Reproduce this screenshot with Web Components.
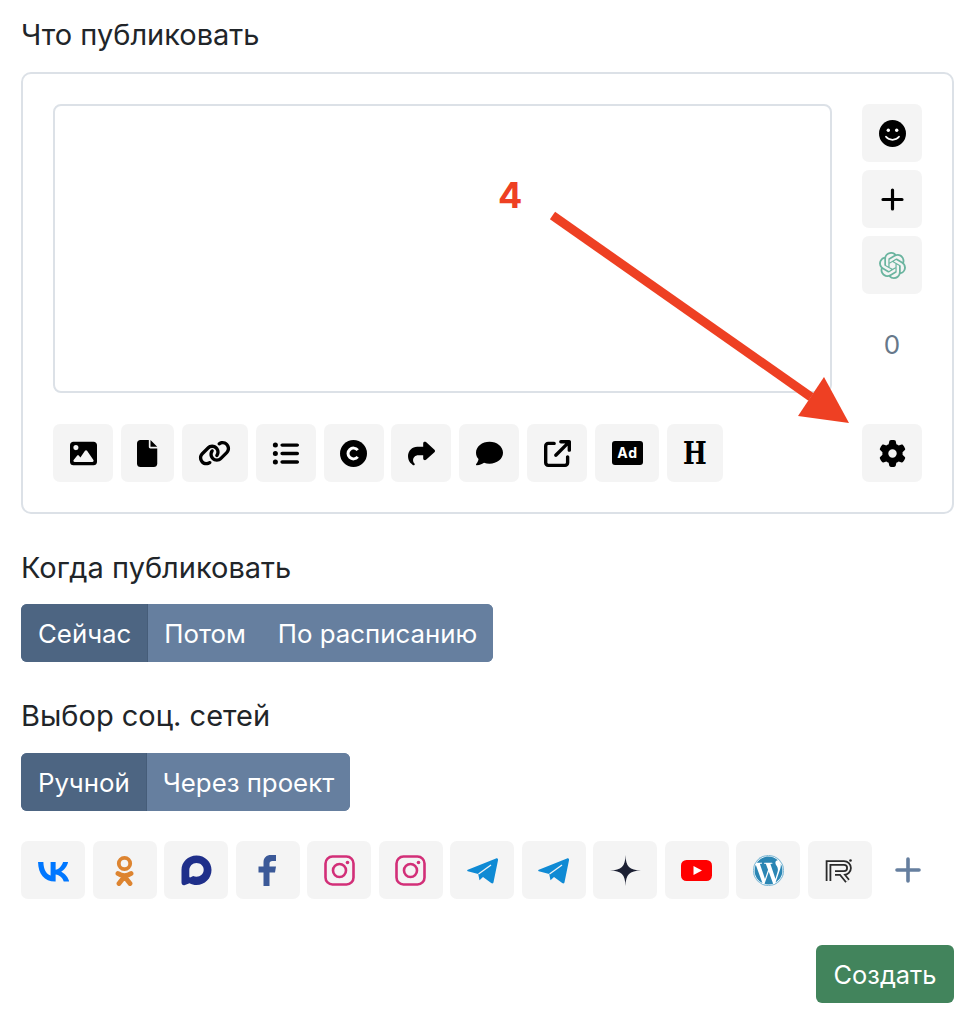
<!DOCTYPE html>
<html lang="ru">
<head>
<meta charset="utf-8">
<title>Что публиковать</title>
<style>
  html, body { margin: 0; background: #fff; }
  body { font-family: Inter, "Liberation Sans", sans-serif; color: #212529; }
  .heading-glyph { display: block; width: 31px; margin-right: -7.5px; font: 700 31px/27px "DejaVu Serif", serif; color: #000; transform: scaleX(.81); transform-origin: 0 50%; }
</style>
</head>
<body>
<publish-form>
  <form-label>Что публиковать</form-label>
  <composer-card>
    <icon-button slot="side"><svg width="27" height="27" viewBox="0 0 27 27"><circle cx="13.5" cy="13.5" r="13.5"/><circle cx="9.3" cy="10.3" r="1.7" fill="#fff"/><circle cx="17.7" cy="10.3" r="1.7" fill="#fff"/><path d="M7 16.8c3.300 4 9.700 4 13 0" fill="none" stroke="#fff" stroke-width="1.8" stroke-linecap="round"/></svg></icon-button>
    <icon-button slot="side"><svg width="27" height="27" viewBox="0 0 27 27"><path d="M13.5 4v19M4 13.500h19" stroke="#000" stroke-width="3.200" stroke-linecap="round"/></svg></icon-button>
    <icon-button slot="side"><svg width="27" height="27" viewBox="0 0 24 24" fill="#6ab49f"><path d="M22.282 9.821a5.985 5.985 0 0 0-.516-4.91 6.046 6.046 0 0 0-6.51-2.9A6.065 6.065 0 0 0 4.981 4.18a5.985 5.985 0 0 0-3.998 2.9 6.046 6.046 0 0 0 .743 7.097 5.98 5.98 0 0 0 .51 4.911 6.051 6.051 0 0 0 6.515 2.9A5.985 5.985 0 0 0 13.26 24a6.056 6.056 0 0 0 5.772-4.206 5.99 5.99 0 0 0 3.997-2.9 6.057 6.057 0 0 0-.747-7.073zM13.26 22.43a4.476 4.476 0 0 1-2.876-1.04l.141-.081 4.779-2.758a.795.795 0 0 0 .392-.681v-6.737l2.02 1.168a.071.071 0 0 1 .038.052v5.583a4.504 4.504 0 0 1-4.494 4.494zM3.6 18.304a4.47 4.47 0 0 1-.535-3.014l.142.085 4.783 2.759a.771.771 0 0 0 .78 0l5.843-3.369v2.332a.08.08 0 0 1-.033.062L9.74 19.95a4.5 4.5 0 0 1-6.14-1.646zM2.34 7.896a4.485 4.485 0 0 1 2.366-1.973V11.6a.766.766 0 0 0 .388.676l5.815 3.355-2.02 1.168a.076.076 0 0 1-.071 0l-4.83-2.786A4.504 4.504 0 0 1 2.34 7.872zm16.597 3.855l-5.833-3.387L15.119 7.2a.076.076 0 0 1 .071 0l4.83 2.791a4.494 4.494 0 0 1-.676 8.105v-5.678a.79.79 0 0 0-.407-.667zm2.01-3.023l-.141-.085-4.774-2.782a.776.776 0 0 0-.785 0L9.409 9.23V6.897a.066.066 0 0 1 .028-.061l4.83-2.787a4.5 4.5 0 0 1 6.68 4.66zm-12.64 4.135l-2.02-1.164a.08.08 0 0 1-.038-.057V6.075a4.5 4.5 0 0 1 7.375-3.453l-.142.08L8.704 5.46a.795.795 0 0 0-.393.681zm1.097-2.365l2.602-1.5 2.607 1.5v2.999l-2.597 1.5-2.607-1.5z"/></svg></icon-button>
    <span slot="count">0</span>

    <icon-button slot="tools"><svg width="27" height="27" viewBox="0 0 512 512"><path d="M0 96C0 60.700 28.700 32 64 32H448c35.300 0 64 28.700 64 64V416c0 35.300-28.700 64-64 64H64c-35.300 0-64-28.700-64-64V96zM323.800 202.500c-4.500-6.600-11.900-10.500-19.800-10.500s-15.400 3.900-19.800 10.500l-87 127.600L170.700 297c-4.600-5.700-11.500-9-18.700-9s-14.200 3.300-18.700 9l-64 80c-5.800 7.200-6.900 17.100-2.900 25.400s12.400 13.600 21.600 13.600h96 32H424c8.900 0 17.100-4.900 21.200-12.800s3.600-17.400-1.400-24.700l-120-176zM112 192a48 48 0 1 0 0-96 48 48 0 1 0 0 96z"/></svg></icon-button>
    <icon-button slot="tools"><svg width="20.250" height="27" viewBox="0 0 384 512"><path d="M0 64C0 28.700 28.700 0 64 0H224V128c0 17.700 14.300 32 32 32H384V448c0 35.300-28.700 64-64 64H64c-35.300 0-64-28.700-64-64V64zm384 64H256V0L384 128z"/></svg></icon-button>
    <icon-button slot="tools"><svg width="33" height="26.400" viewBox="0 0 640 512"><path d="M579.800 267.700c56.500-56.500 56.500-148 0-204.500c-50-50-128.800-56.500-186.300-15.400l-1.600 1.100c-14.400 10.300-17.700 30.300-7.400 44.600s30.300 17.700 44.600 7.400l1.600-1.100c32.100-22.900 76-19.300 103.800 8.600c31.500 31.500 31.500 82.500 0 114L422.300 334.800c-31.500 31.500-82.500 31.500-114 0c-27.900-27.900-31.500-71.800-8.600-103.800l1.100-1.600c10.300-14.400 6.900-34.400-7.400-44.600s-34.400-6.900-44.600 7.400l-1.100 1.600C206.500 251.200 213 330 263 380c56.500 56.500 148 56.500 204.500 0L579.800 267.700zM60.200 244.300c-56.500 56.500-56.500 148 0 204.500c50 50 128.800 56.500 186.300 15.400l1.600-1.100c14.400-10.300 17.700-30.300 7.400-44.600s-30.300-17.700-44.600-7.400l-1.600 1.100c-32.100 22.900-76 19.300-103.800-8.600C74 372 74 321 105.500 289.500L217.700 177.200c31.500-31.500 82.500-31.500 114 0c27.900 27.900 31.500 71.800 8.600 103.900l-1.100 1.600c-10.300 14.400-6.900 34.400 7.400 44.600s34.400 6.900 44.600-7.400l1.100-1.600C433.500 260.800 427 182 377 132c-56.500-56.500-148-56.500-204.500 0L60.200 244.300z"/></svg></icon-button>
    <icon-button slot="tools"><svg width="27" height="27" viewBox="0 0 512 512"><path d="M64 144a48 48 0 1 0 0-96 48 48 0 1 0 0 96zM192 64c-17.700 0-32 14.300-32 32s14.300 32 32 32H480c17.700 0 32-14.300 32-32s-14.300-32-32-32H192zm0 160c-17.700 0-32 14.300-32 32s14.300 32 32 32H480c17.700 0 32-14.300 32-32s-14.300-32-32-32H192zm0 160c-17.700 0-32 14.300-32 32s14.300 32 32 32H480c17.700 0 32-14.300 32-32s-14.300-32-32-32H192zM64 464a48 48 0 1 0 0-96 48 48 0 1 0 0 96zm48-208a48 48 0 1 0 -96 0 48 48 0 1 0 96 0z"/></svg></icon-button>
    <icon-button slot="tools"><svg width="27" height="27" viewBox="0 0 27 27"><circle cx="13.5" cy="13.5" r="13.5"/><path d="M17.700 10.200a5.400 5.400 0 1 0 0 6.600" fill="none" stroke="#fff" stroke-width="3"/></svg></icon-button>
    <icon-button slot="tools"><svg width="27" height="27" viewBox="0 0 512 512"><path d="M307 34.800c-11.500 5.100-19 16.600-19 29.200v64H176C78.800 128 0 206.800 0 304C0 417.300 81.500 467.900 100.200 478.100c2.500 1.400 5.300 1.900 8.100 1.900c10.900 0 19.700-8.900 19.700-19.700c0-7.500-4.300-14.400-9.800-19.500C108.800 431.900 96 414.400 96 384c0-53 43-96 96-96h96v64c0 12.600 7.400 24.100 19 29.200s25 3 34.400-5.400l160-144c6.700-6.100 10.600-14.700 10.600-23.800s-3.800-17.700-10.600-23.800l-160-144c-9.400-8.500-22.900-10.600-34.400-5.400z"/></svg></icon-button>
    <icon-button slot="tools"><svg width="27" height="27" viewBox="0 0 512 512"><path d="M512 240c0 114.900-114.600 208-256 208c-37.100 0-72.300-6.400-104.100-17.900c-11.900 8.700-31.300 20.600-54.300 30.600C73.600 471.100 44.700 480 16 480c-6.500 0-12.300-3.900-14.800-9.900c-2.500-6-1.100-12.800 3.400-17.400c.3-.3 .7-.7 1.600-1.700c1.100-1.200 2.800-3.100 4.900-5.700c4.100-5 9.600-12.400 15.200-21.600c10-16.600 19.500-38.400 21.400-62.900C17.700 326.800 0 285.100 0 240C0 125.100 114.600 32 256 32s256 93.100 256 208z"/></svg></icon-button>
    <icon-button slot="tools"><svg width="27" height="27" viewBox="0 0 512 512"><path d="M320 0c-17.700 0-32 14.300-32 32s14.300 32 32 32h82.700L201.400 265.400c-12.500 12.500-12.500 32.800 0 45.300s32.800 12.500 45.300 0L448 109.300V192c0 17.700 14.300 32 32 32s32-14.300 32-32V32c0-17.700-14.300-32-32-32H320zM80 32C35.800 32 0 67.800 0 112V432c0 44.200 35.800 80 80 80H400c44.200 0 80-35.800 80-80V320c0-17.700-14.300-32-32-32s-32 14.300-32 32V432c0 8.800-7.200 16-16 16H80c-8.800 0-16-7.200-16-16V112c0-8.800 7.200-16 16-16H192c17.700 0 32-14.300 32-32s-14.300-32-32-32H80z"/></svg></icon-button>
    <icon-button slot="tools"><svg width="31" height="24" viewBox="0 0 31 24"><rect width="31" height="24" rx="3"/><text x="15.5" y="17.200" text-anchor="middle" font-family="Inter, sans-serif" font-weight="700" font-size="14" letter-spacing=".8" fill="#fff">Ad</text></svg></icon-button>
    <icon-button slot="tools"><span class="heading-glyph">H</span></icon-button>

    <icon-button slot="settings"><svg width="27" height="27" viewBox="0 0 512 512"><path d="M495.900 166.600c3.200 8.700 .5 18.400-6.400 24.600l-43.300 39.400c1.100 8.300 1.700 16.800 1.700 25.400s-.6 17.100-1.700 25.400l43.300 39.400c6.900 6.200 9.600 15.900 6.400 24.600c-4.400 11.900-9.700 23.300-15.800 34.300l-4.700 8.100c-6.600 11-14 21.400-22.100 31.200c-5.900 7.200-15.700 9.600-24.500 6.800l-55.700-17.700c-13.400 10.300-28.200 18.900-44 25.400l-12.500 57.100c-2 9.100-9 16.300-18.200 17.800c-13.800 2.300-28 3.500-42.500 3.500s-28.700-1.200-42.500-3.500c-9.200-1.500-16.200-8.700-18.200-17.800l-12.500-57.100c-15.800-6.500-30.600-15.100-44-25.400L83.100 425.900c-8.800 2.800-18.600 .3-24.500-6.800c-8.100-9.800-15.500-20.200-22.100-31.200l-4.700-8.100c-6.100-11-11.400-22.400-15.800-34.300c-3.200-8.700-.5-18.400 6.400-24.600l43.300-39.400C64.600 273.100 64 264.600 64 256s.6-17.100 1.700-25.400L22.400 191.200c-6.900-6.200-9.600-15.900-6.400-24.600c4.400-11.900 9.700-23.300 15.800-34.300l4.700-8.100c6.600-11 14-21.400 22.100-31.200c5.900-7.200 15.700-9.600 24.500-6.800l55.700 17.700c13.400-10.300 28.200-18.900 44-25.400l12.500-57.100c2-9.100 9-16.300 18.200-17.800C227.300 1.200 241.500 0 256 0s28.700 1.200 42.500 3.500c9.200 1.500 16.200 8.700 18.200 17.800l12.500 57.100c15.800 6.500 30.600 15.100 44 25.400l55.700-17.700c8.800-2.800 18.600-.3 24.500 6.800c8.100 9.800 15.500 20.200 22.100 31.200l4.700 8.100c6.100 11 11.400 22.400 15.800 34.300zM256 336a80 80 0 1 0 0-160 80 80 0 1 0 0 160z"/></svg></icon-button>
  </composer-card>

  <form-label class="next tight">Когда публиковать</form-label>
  <seg-group>
    <seg-option active>Сейчас</seg-option>
    <seg-option>Потом</seg-option>
    <seg-option>По расписанию</seg-option>
  </seg-group>

  <form-label class="next">Выбор соц. сетей</form-label>
  <seg-group>
    <seg-option active>Ручной</seg-option>
    <seg-option>Через проект</seg-option>
  </seg-group>

  <social-row>
    <icon-button><svg width="31" height="31" viewBox="0 0 31 31"><g transform="translate(-3.500 -3.100) scale(1.560)"><path fill="#07f" d="M13.162 18.994c-6.836 0-10.735-4.688-10.898-12.490h3.424c.113 5.727 2.637 8.152 4.636 8.653V6.504h3.224v4.939c1.974-.213 4.049-2.464 4.748-4.939h3.224c-.538 3.051-2.787 5.302-4.386 6.228 1.599.75 4.161 2.714 5.135 6.262h-3.549c-.762-2.374-2.662-4.214-5.172-4.464v4.464z"/></g></svg></icon-button>
    <icon-button><svg width="31" height="31" viewBox="0 0 31 31" fill="none" stroke="#dd8430"><circle cx="15.5" cy="8.500" r="5.700" stroke-width="3.800"/><path d="M9 18.500c4 2.800 9 2.800 13 0M15.500 21.500L10 28.500M15.500 21.500L21 28.500" stroke-width="4.800" stroke-linecap="round"/></svg></icon-button>
    <icon-button><svg width="31" height="31" viewBox="0 0 31 31"><path fill="#1f2f8a" d="M15.500.500C7 .500.500 7 .500 15v12.500c0 2 1.500 3.200 3.500 2.500l4.500-1.800c2 1 4.500 1.800 7 1.800 8.300 0 15-6.700 15-15S23.800.500 15.500.500z"/><path fill="#f4f4f4" d="M15.500 8c-4 0-7.200 3.200-7.200 7.200v6.300c0 .8.700 1.200 1.400.8l2.500-1.300c1 .5 2.100.7 3.300.7 4 0 7.200-3.200 7.200-7S19.500 8 15.500 8z"/></svg></icon-button>
    <icon-button><svg width="31" height="31" viewBox="-6.500 0 31 31"><path fill="#3b5998" d="M5 31V17.500H0v-6h5V7.500C5 2.500 8 0 12.500 0h5v6H14c-2 0-3 1-3 2.500v3h6.500l-1 6H11V31z"/></svg></icon-button>
    <icon-button><svg width="31" height="31" viewBox="0 0 31 31" fill="none" stroke="#d22f78"><rect x="1.500" y="1.500" width="28" height="28" rx="7" stroke-width="2.600"/><circle cx="15.500" cy="15.500" r="6.500" stroke-width="2.600"/><circle cx="23.500" cy="7.500" r="1.800" fill="#d22f78" stroke="none"/></svg></icon-button>
    <icon-button><svg width="31" height="31" viewBox="0 0 31 31" fill="none" stroke="#d22f78"><rect x="1.500" y="1.500" width="28" height="28" rx="7" stroke-width="2.600"/><circle cx="15.500" cy="15.500" r="6.500" stroke-width="2.600"/><circle cx="23.500" cy="7.500" r="1.800" fill="#d22f78" stroke="none"/></svg></icon-button>
    <icon-button><svg width="31" height="31" viewBox="0 0 31 31"><path fill="#0f8ad4" d="M.8 14.800L29 3.500c1.300-.5 2.300.4 2 1.700l-4.500 22c-.3 1.300-1.300 1.500-2.300.8l-8.200-6-3.500 3.200-1.300-6.300-10.400-2.700c-.8-.3-.8-1.100 0-1.400z"/><path d="M11.500 19L24 10" stroke="#f4f4f4" stroke-width="1.300"/></svg></icon-button>
    <icon-button><svg width="31" height="31" viewBox="0 0 31 31"><path fill="#0f8ad4" d="M.8 14.800L29 3.500c1.300-.5 2.300.4 2 1.700l-4.500 22c-.3 1.300-1.300 1.500-2.300.8l-8.200-6-3.500 3.200-1.300-6.300-10.400-2.700c-.8-.3-.8-1.100 0-1.400z"/><path d="M11.500 19L24 10" stroke="#f4f4f4" stroke-width="1.300"/></svg></icon-button>
    <icon-button><svg width="31" height="31" viewBox="0 0 31 31"><path fill="#1c2033" d="M15.500 0C15.800 11.500 19.500 15.200 31 15.500 19.500 15.800 15.800 19.500 15.500 31 15.200 19.500 11.500 15.800 0 15.500 11.500 15.200 15.200 11.500 15.500 0z"/></svg></icon-button>
    <icon-button><svg width="31" height="31" viewBox="0 0 31 31"><rect y="5" width="31" height="21" rx="5.500" fill="#f00"/><path d="M12.500 11l8.500 4.500-8.500 4.500z" fill="#fff"/></svg></icon-button>
    <icon-button><svg width="31" height="31" viewBox="0 0 24 24"><circle cx="12" cy="12" r="11.900" fill="#2b86b4"/><path fill="#fff" d="M21.469 6.825c.84 1.537 1.318 3.3 1.318 5.175 0 3.979-2.156 7.456-5.363 9.325l3.295-9.527c.615-1.54.82-2.771.82-3.864 0-.405-.026-.78-.07-1.11m-7.981.105c.647-.03 1.232-.105 1.232-.105.582-.075.514-.93-.067-.899 0 0-1.755.135-2.88.135-1.064 0-2.85-.15-2.85-.15-.585-.03-.661.855-.075.885 0 0 .54.061 1.125.09l1.68 4.605-2.37 7.08L5.354 6.9c.649-.03 1.234-.1 1.234-.1.585-.075.516-.93-.065-.896 0 0-1.746.138-2.874.138-.2 0-.438-.008-.69-.015C4.911 3.15 8.235 1.215 12 1.215c2.809 0 5.365 1.072 7.286 2.833-.046-.003-.091-.009-.141-.009-1.06 0-1.812.923-1.812 1.914 0 .89.513 1.643 1.06 2.531.411.72.89 1.643.89 2.977 0 .915-.354 1.994-.821 3.479l-1.075 3.585-3.9-11.61.001.014zM12 22.784c-1.059 0-2.081-.153-3.048-.437l3.237-9.406 3.315 9.087c.024.053.05.101.078.149-1.12.393-2.325.609-3.582.609M1.211 12c0-1.564.336-3.05.935-4.39L7.29 21.709C3.694 19.96 1.212 16.271 1.211 12M12 0C5.385 0 0 5.385 0 12s5.385 12 12 12 12-5.385 12-12S18.615 0 12 0"/><circle cx="12" cy="12" r="11.700" fill="none" stroke="#5aa5c9" stroke-width=".6"/></svg></icon-button>
    <icon-button><svg width="31" height="31" viewBox="0 0 31 31" fill="none"><path d="M4.500 26V8H20a5 5 0 0 1 0 10H11M17 18l6.500 8" stroke="#2a2a2a" stroke-width="5.600"/><path d="M4.500 26V8H20a5 5 0 0 1 0 10H11M17 18l6.500 8" stroke="#f4f4f4" stroke-width="2"/><circle cx="26.500" cy="5.500" r="1.300" fill="#2a2a2a"/></svg></icon-button>
    <span slot="add"><svg width="26" height="26" viewBox="0 0 26 26" style="display:block"><path d="M13 2v22M2 13h22" stroke="#667f9f" stroke-width="3.600" stroke-linecap="round"/></svg></span>
  </social-row>

  <form-actions><create-button>Создать</create-button></form-actions>

  <arrow-callout>4</arrow-callout>
</publish-form>

<script>
const define = (name, css, html) => {
  const template = document.createElement("template");
  template.innerHTML = `<style>${css}</style>${html}`;
  window.customElements.define(name, class extends HTMLElement {
    constructor() {
      super();
      this.attachShadow({ mode: "open" }).appendChild(template.content.cloneNode(true));
    }
  });
};

define("publish-form", `
  :host { display: block; position: relative; padding: 16px 21px 21px; box-sizing: border-box; min-height: 1024px; }
  ::slotted(form-label.next) { margin-top: 35px; }
  ::slotted(form-label.tight) { margin-bottom: 17px; }
`, `<slot></slot>`);

define("form-label", `
  :host { display: block; height: 38px; line-height: 38px; margin-bottom: 18px; font-size: 29px; color: #212529; }
`, `<slot></slot>`);

define("composer-card", `
  :host { display: block; border: 2px solid #dce1e7; border-radius: 10px; padding: 30px; }
  .grid { display: grid; grid-template-columns: 1fr 60px; grid-template-rows: 289px 58px; column-gap: 30px; row-gap: 31px; }
  textarea { display: block; width: 100%; height: 100%; box-sizing: border-box; border: 2px solid #dce1e7; border-radius: 8px; resize: none; outline: none; margin: 0; background: #fff; }
  .side { display: flex; flex-direction: column; gap: 8px; }
  .count { flex: 1; display: flex; align-items: center; justify-content: center; padding-bottom: 7px; font-size: 26px; color: #67788a; }
  .tools { display: flex; gap: 7.850px; }
`, `
  <div class="grid">
    <textarea></textarea>
    <div class="side">
      <slot name="side"></slot>
      <div class="count"><slot name="count"></slot></div>
    </div>
    <div class="tools"><slot name="tools"></slot></div>
    <slot name="settings"></slot>
  </div>
`);

define("icon-button", `
  :host { display: inline-flex; align-items: center; justify-content: center; height: 58px; padding: 0 16.500px; box-sizing: border-box; background: #f4f4f4; border-radius: 7px; }
  ::slotted(svg) { display: block; flex: none; }
`, `<slot></slot>`);

define("seg-group", `
  :host { display: flex; width: max-content; height: 58px; border-radius: 6px; overflow: hidden; background: #667f9f; }
`, `<slot></slot>`);

define("seg-option", `
  :host { display: flex; align-items: center; padding: 0 16px; font-size: 25.800px; color: #fff; background: #667f9f; }
  :host([active]) { padding: 0 16px 0 17px; background: #4d6582; border-right: 1px solid #465d79; }
`, `<slot></slot>`);

define("social-row", `
  :host { display: flex; align-items: center; gap: 7.500px; margin-top: 30px; }
  .add { display: flex; align-items: center; justify-content: center; width: 58px; }
`, `<slot></slot><div class="add"><slot name="add"></slot></div>`);

define("form-actions", `
  :host { display: flex; justify-content: flex-end; margin-top: 46px; }
`, `<slot></slot>`);

define("create-button", `
  :host { display: flex; align-items: center; height: 58px; padding: 0 17.500px; font-size: 25.400px; color: #fff; background: #42845c; border-radius: 6px; }
`, `<slot></slot>`);

define("arrow-callout", `
  :host { position: absolute; left: 0; top: 0; width: 975px; height: 1024px; pointer-events: none; }
  svg { position: absolute; left: 0; top: 0; }
  .num { position: absolute; left: 498px; top: 174px; font: 700 36px/42px Inter, "Liberation Sans", sans-serif; color: #ee4023; }
`, `
  <div class="num"><slot></slot></div>
  <svg width="975" height="1024" viewBox="0 0 975 1024">
    <path d="M552.500 215.500L811 397" stroke="#ee4023" stroke-width="9"/>
    <path d="M824 377L798 416L849 423z" fill="#ee4023"/>
  </svg>
`);
</script>
</body>
</html>
